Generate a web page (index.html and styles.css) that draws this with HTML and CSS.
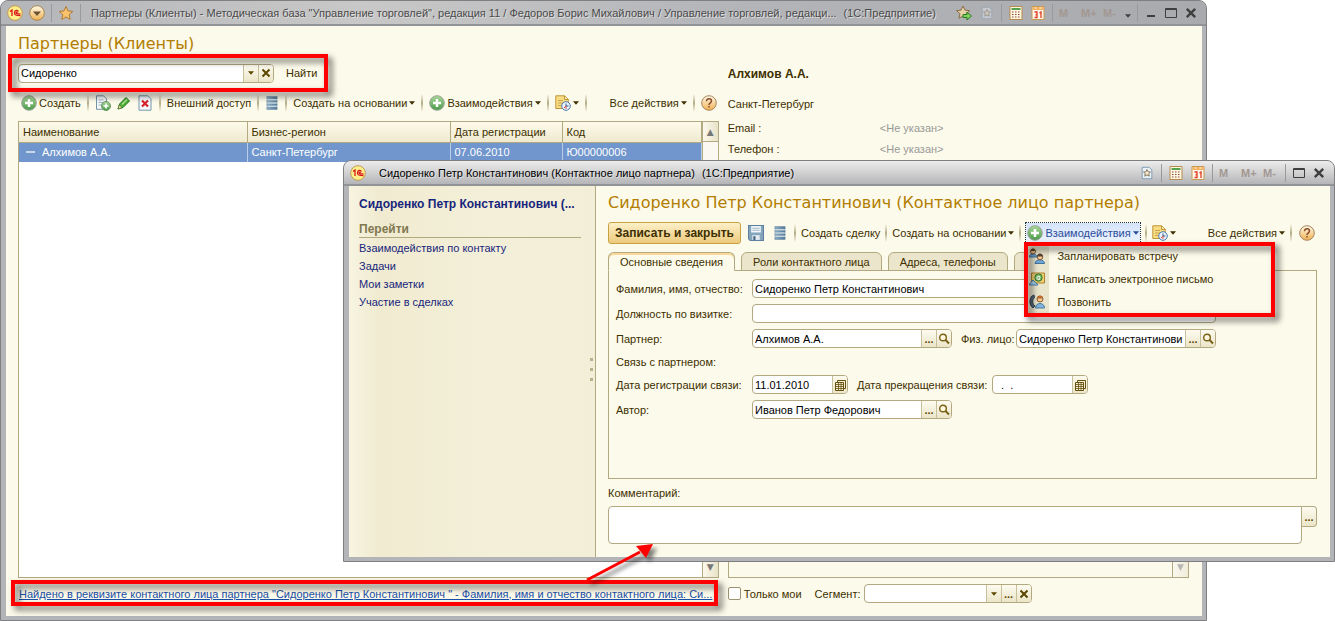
FILE: index.html
```html
<!DOCTYPE html>
<html lang="ru">
<head>
<meta charset="utf-8">
<title>Партнеры (Клиенты)</title>
<link rel="stylesheet" href="styles.css">
</head>
<body>
<svg class="defs" aria-hidden="true">
  <defs>
    <linearGradient id="gold" x1="0" y1="0" x2="0" y2="1"><stop offset="0" stop-color="#fffbe8"/><stop offset="1" stop-color="#f0b050"/></linearGradient>
    <linearGradient id="green" x1="0" y1="0" x2="0" y2="1"><stop offset="0" stop-color="#a9d79a"/><stop offset="1" stop-color="#4b9a48"/></linearGradient>
    <linearGradient id="steel" x1="0" y1="0" x2="1" y2="0"><stop offset="0" stop-color="#8fb0c8"/><stop offset="1" stop-color="#507898"/></linearGradient>
    <symbol id="logo" viewBox="0 0 16 16"><circle cx="8" cy="8" r="7.3" fill="#fdf08a" stroke="#c49a50"/><path d="M3 6.5 5 5v6M11.5 6.5C10.600 4.600 7.500 5 7.500 8c0 2.200 1.500 2.600 6 2.600M10.800 7.500c-1-.9-1.700-.2-1.600.6.1.8 1 .8 4.300.8" fill="none" stroke="#d8151c" stroke-width="1.300"/></symbol>
    <symbol id="down" viewBox="0 0 16 16"><circle cx="8" cy="8" r="7.300" fill="url(#gold)" stroke="#a98750"/><path d="M4 6.500h8L8 11z" fill="#6b5130"/></symbol>
    <symbol id="star" viewBox="0 0 16 16"><path d="M8 1.500l2 4.400 4.800.5-3.600 3.200 1 4.800L8 12l-4.200 2.400 1-4.800L1.200 6.400 6 5.900z" fill="#f8c36c" stroke="#b07a35"/></symbol>
    <symbol id="starGo" viewBox="0 0 16 16"><path d="M7 1l2 4.200 4.500.5-3.400 3 1 4.500L7 11l-4 2.200 1-4.500-3.400-3L5 5.200z" fill="#e8d3a8" stroke="#8a6c45"/><path d="M7 9.500h4V7l4.500 4-4.500 4v-2.500H7z" fill="#7fd05a" stroke="#2b7b25"/></symbol>
    <symbol id="pageStar" viewBox="0 0 14 16"><path d="M1.500 1.500h8l3 3v10h-11z" fill="#eaf2f7" stroke="#7595ae"/><path d="M7 4l1.300 2.600 2.700.3-2 1.900.6 2.800L7 10.200l-2.600 1.400.6-2.800-2-1.900 2.700-.3z" fill="#f5e6c8" stroke="#776b58"/></symbol>
    <symbol id="calc" viewBox="0 0 13 14"><path d="M.5.5h12v13H.5z" fill="#fff6e2" stroke="#b98a4e"/><path d="M2 2h9v2H2z" fill="#55a34c"/><path d="M2.500 6h8M2.500 8.500h8M2.500 11h8" stroke="#8c4935" stroke-width="1.200" stroke-dasharray="1.500 1.500"/></symbol>
    <symbol id="cal" viewBox="0 0 13 14"><path d="M.5.500h12v13H.5z" fill="#fff8ea" stroke="#c79955"/><path d="M1 1h11v3H1z" fill="#f2b15c"/><path d="M3 2h2M8 2h2" stroke="#fff"/><path d="M3 6h2.500v2.800H4h1.500v2.700H3M8 7l1.500-1v6" fill="none" stroke="#e03a22" stroke-width="1.300"/></symbol>
    <symbol id="plus" viewBox="0 0 16 16"><circle cx="8" cy="8" r="7.300" fill="url(#green)" stroke="#9aa398"/><path d="M8 4v8M4 8h8" stroke="#fff" stroke-width="2.500"/></symbol>
    <symbol id="copy" viewBox="0 0 16 16"><path d="M1.500.8h7l3 3v10.500h-10z" fill="#f4f8fa" stroke="#7693a8"/><path d="M3.500 5h5M3.500 7.500h5M3.500 10h3" stroke="#9cb0be"/><circle cx="11" cy="11" r="4.500" fill="url(#green)" stroke="#6b9865"/><path d="M11 8.500v5M8.500 11h5" stroke="#fff" stroke-width="1.600"/></symbol>
    <symbol id="pencil" viewBox="0 0 14 14"><path d="M1 13l1.500-5L9 1.500 12.500 5 6 11.500z" fill="#4dad35" stroke="#23761c"/><path d="M1 13l1.300-4L5 11.600z" fill="#f7dda0" stroke="#47692b" stroke-width=".6"/><path d="M5 8.500L10 3.500" stroke="#b4e69b" stroke-width="1.200"/></symbol>
    <symbol id="delete" viewBox="0 0 14 16"><path d="M1 .8h9l3 3v11.400H1z" fill="#f3f9fc" stroke="#7795ab"/><path d="M4 5.500l6 6M10 5.500l-6 6" stroke="#d7222c" stroke-width="2.200"/></symbol>
    <symbol id="list" viewBox="0 0 12 15"><path d="M.5.500h11v3H.5zM.5 4.500h11v2.500H.5zM.5 8h11v2.500H.5zM.5 11.500h11v3H.5z" fill="url(#steel)" stroke="#6888a2" stroke-width=".6"/><path d="M1 4h10M1 7.500h10M1 11h10" stroke="#dce8ef"/></symbol>
    <symbol id="report" viewBox="0 0 16 16"><path d="M.8.800h9l3.500 3.500v9.200H.8z" fill="#f9dd82" stroke="#bf953d"/><path d="M9.500 1v3.500H13" fill="#fff1b5" stroke="#bf953d"/><path d="M3 5.500h5M3 8h5M3 10.500h3" stroke="#c9a451"/><circle cx="11" cy="11" r="4.300" fill="#edf6ff" stroke="#4779ac"/><path d="M11 8.500V11h2.500" fill="none" stroke="#2b5687"/><path d="M11 14v-3l-2 2" fill="none" stroke="#d35046"/></symbol>
    <symbol id="help" viewBox="0 0 16 16"><circle cx="8" cy="8" r="7.300" fill="url(#gold)" stroke="#a98462"/><path d="M5.500 6.200c0-3.300 5-3 5-.2 0 2-2.500 1.800-2.500 4M8 11v1.500" fill="none" stroke="#8b4a2a" stroke-width="1.500"/></symbol>
    <symbol id="save" viewBox="0 0 15 15"><path d="M.5.500h14v14H2l-1.500-1.500z" fill="#85a5bd" stroke="#5d819d"/><path d="M3 1h9v6H3z" fill="#f3f8fb"/><path d="M4 3h7M4 5h7" stroke="#a4b7c3"/><path d="M4 9.500h7V14H4z" fill="#e1eaf0"/><path d="M5 10.500h2V14H5z" fill="#3f617c"/></symbol>
    <symbol id="lens" viewBox="0 0 12 12"><circle cx="5" cy="4.500" r="3.300" fill="#fff9df" stroke="#786016" stroke-width="1.400"/><path d="M7.500 7l3.500 3.500" stroke="#786016" stroke-width="2"/></symbol>
    <symbol id="grid" viewBox="0 0 12 12"><path d="M3.500 1.500h8v8h-8z" fill="#f5eed2" stroke="#665010"/><path d="M1.500 3.500h8v8h-8z" fill="#f5eed2" stroke="#665010"/><path d="M1.500 5.500h8M1.500 7.500h8M1.500 9.500h8M4.500 3.500v8M7 3.500v8" stroke="#665010" stroke-width=".8"/></symbol>
    <symbol id="caret" viewBox="0 0 7 4"><path d="M0 0h7L3.500 4z" fill="currentColor"/></symbol>
    <symbol id="cross" viewBox="0 0 10 10"><path d="M1.500 1.500l7 7M8.500 1.500l-7 7" stroke="currentColor" stroke-width="2"/></symbol>
    <symbol id="max" viewBox="0 0 12 12"><path d="M.5 1.500h11v9H.5zM.5 2.500h11" fill="none" stroke="#3f3f3f"/></symbol>
    <symbol id="min" viewBox="0 0 12 12"><path d="M2 9h8" stroke="#3f3f3f" stroke-width="2"/></symbol>
    <symbol id="people" viewBox="0 0 16 16"><path d="M0 9c0-4 8-4 8 0z" fill="#6fa7d6" stroke="#44749f"/><circle cx="4" cy="3.500" r="2.500" fill="#f4c996" stroke="#7d5737"/><path d="M1.500 3C2-.5 6-.5 6.500 3z" fill="#6d4928"/><path d="M6 15.500c0-5 9.500-5 9.500 0z" fill="#6fa7d6" stroke="#44749f"/><circle cx="11" cy="9" r="2.800" fill="#f4c996" stroke="#7d5737"/><path d="M8 8.500c.5-4 5.500-4 6 0z" fill="#594234"/></symbol>
    <symbol id="mail" viewBox="0 0 16 14"><path d="M2.500 1h13v10h-13z" fill="#f1d070" stroke="#ad812f"/><circle cx="9.500" cy="5.500" r="3.700" fill="#74b660" stroke="#30762f"/><path d="M11 7c-4 2-4-3-1-2.800 1.500.2.800 2.300 0 2.800" fill="none" stroke="#fff"/><path d="M.5 12L4 8l5 5H.5z" fill="#a8d1ef" stroke="#4a7fa8"/></symbol>
    <symbol id="call" viewBox="0 0 16 16"><path d="M5 1C0 2-.5 11 4 14l2-2c-3-2-3-6-.5-8.500z" fill="#52687a" stroke="#354754"/><circle cx="11" cy="5" r="3" fill="#f6c892" stroke="#8b5b2f"/><path d="M8 4.500c.5-4 5.500-4 6 0z" fill="#b86b2c"/><path d="M6.500 14c0-6 9-6 9 0z" fill="#85b5dc" stroke="#4479a3"/></symbol>
  </defs>
</svg>

<div class="desktop">
  <section class="window window-main" aria-label="Партнеры (Клиенты)">
    <header class="titlebar">
      <svg class="i16"><use href="#logo"/></svg>
      <button class="icon" aria-label="Главное меню"><svg class="i16"><use href="#down"/></svg></button>
      <span class="sep"></span>
      <button class="icon" aria-label="Избранное"><svg class="i16"><use href="#star"/></svg></button>
      <span class="sep"></span>
      <div class="caption"><span class="clip">Партнеры (Клиенты) - Методическая база "Управление торговлей", редакция 11 / Федоров Борис Михайлович / Управление торговлей, редакци...</span><span>(1С:Предприятие)</span></div>
      <div class="tools">
        <button class="icon" aria-label="Добавить в избранное"><svg class="i16"><use href="#starGo"/></svg></button>
        <button class="icon faded" aria-label="Ссылка"><svg class="i14"><use href="#pageStar"/></svg></button>
        <span class="sep"></span>
        <button class="icon" aria-label="Калькулятор"><svg class="i14"><use href="#calc"/></svg></button>
        <button class="icon" aria-label="Календарь"><svg class="i14"><use href="#cal"/></svg></button>
        <span class="sep"></span>
        <button class="mem">M</button><button class="mem">M+</button><button class="mem">M-</button>
        <button class="low" aria-label="Еще"><svg class="caret"><use href="#caret"/></svg></button>
        <span class="sep"></span>
        <button class="icon" aria-label="Свернуть"><svg class="i12"><use href="#min"/></svg></button>
        <button class="icon" aria-label="Развернуть"><svg class="i12"><use href="#max"/></svg></button>
        <button class="icon" aria-label="Закрыть"><svg class="i12"><use href="#cross"/></svg></button>
      </div>
    </header>
    <div class="main-body">
      <h1 class="heading">Партнеры (Клиенты)</h1>
      <div class="columns">
        <div class="list-side">
          <form class="search">
            <div class="field combo"><input aria-label="Строка поиска" value="Сидоренко"><button type="button" aria-label="История"><svg class="caret"><use href="#caret"/></svg></button><button type="button" aria-label="Очистить"><svg class="i10"><use href="#cross"/></svg></button></div>
            <button type="button" class="flat">Найти</button>
          </form>
          <div class="toolbar">
            <button class="flat"><svg class="i16"><use href="#plus"/></svg>Создать</button>
            <span class="sep"></span>
            <button class="icon" aria-label="Скопировать"><svg class="i16"><use href="#copy"/></svg></button>
            <button class="icon" aria-label="Изменить"><svg class="i14"><use href="#pencil"/></svg></button>
            <button class="icon" aria-label="Удалить"><svg class="i16"><use href="#delete"/></svg></button>
            <span class="sep"></span>
            <button class="flat">Внешний доступ</button>
            <span class="sep"></span>
            <button class="icon" aria-label="Список"><svg class="i14"><use href="#list"/></svg></button>
            <span class="sep"></span>
            <button class="flat">Создать на основании<svg class="caret"><use href="#caret"/></svg></button>
            <span class="sep"></span>
            <button class="flat"><svg class="i16"><use href="#plus"/></svg>Взаимодействия<svg class="caret"><use href="#caret"/></svg></button>
            <span class="sep"></span>
            <button class="flat" aria-label="Отчеты"><svg class="i16"><use href="#report"/></svg><svg class="caret"><use href="#caret"/></svg></button>
            <span class="sep"></span>
            <button class="flat push">Все действия<svg class="caret"><use href="#caret"/></svg></button>
            <span class="sep"></span>
            <button class="icon" aria-label="Справка"><svg class="i16"><use href="#help"/></svg></button>
          </div>
          <div class="table-box">
            <div class="table-area">
              <table>
                <colgroup><col class="c-name"><col class="c-region"><col class="c-date"><col class="c-code"></colgroup>
                <thead><tr><th>Наименование</th><th>Бизнес-регион</th><th>Дата регистрации</th><th>Код</th></tr></thead>
                <tbody><tr><td><span class="dash"></span>Алхимов А.А.</td><td>Санкт-Петербург</td><td>07.06.2010</td><td>Ю00000006</td></tr></tbody>
              </table>
            </div>
            <div class="scroll"><button aria-label="Вверх">▲</button><button aria-label="Вниз">▼</button></div>
          </div>
        </div>
        <div class="info-side">
          <strong class="info-name">Алхимов А.А.</strong>
          <p class="info-city">Санкт-Петербург</p>
          <dl class="contacts"><dt>Email :</dt><dd>&lt;Не указан&gt;</dd><dt>Телефон :</dt><dd>&lt;Не указан&gt;</dd></dl>
          <div class="info-box"><div class="scroll dim"><button aria-label="Вверх">▲</button><button aria-label="Вниз">▼</button></div></div>
        </div>
      </div>
      <footer class="columns foot">
        <a class="found" href="#">Найдено в реквизите контактного лица партнера "Сидоренко Петр Константинович " - Фамилия, имя и отчество контактного лица: Си...</a>
        <div class="filters">
          <label class="check"><input type="checkbox">Только мои</label>
          <label for="segment">Сегмент:</label>
          <div class="field"><input id="segment"><button aria-label="Список сегментов"><svg class="caret"><use href="#caret"/></svg></button><button aria-label="Выбрать">...</button><button aria-label="Очистить сегмент"><svg class="i10"><use href="#cross"/></svg></button></div>
        </div>
      </footer>
    </div>
    <div class="mark mark-search"></div>
    <div class="mark mark-found"></div>
  </section>

  <section class="window window-card" aria-label="Сидоренко Петр Константинович">
    <header class="titlebar">
      <svg class="i16"><use href="#logo"/></svg>
      <div class="caption"><span class="clip">Сидоренко Петр Константинович (Контактное лицо партнера)</span><span>(1С:Предприятие)</span></div>
      <div class="tools">
        <button class="icon" aria-label="Ссылка"><svg class="i14"><use href="#pageStar"/></svg></button>
        <span class="sep"></span>
        <button class="icon" aria-label="Калькулятор"><svg class="i14"><use href="#calc"/></svg></button>
        <button class="icon" aria-label="Календарь"><svg class="i14"><use href="#cal"/></svg></button>
        <span class="sep"></span>
        <button class="mem">M</button><button class="mem">M+</button><button class="mem">M-</button>
        <span class="sep"></span>
        <button class="icon" aria-label="Развернуть"><svg class="i12"><use href="#max"/></svg></button>
        <button class="icon" aria-label="Закрыть"><svg class="i12"><use href="#cross"/></svg></button>
      </div>
    </header>
    <div class="card-body">
      <nav class="nav">
        <strong class="nav-title">Сидоренко Петр Константинович (...</strong>
        <h2>Перейти</h2>
        <a href="#">Взаимодействия по контакту</a>
        <a href="#">Задачи</a>
        <a href="#">Мои заметки</a>
        <a href="#">Участие в сделках</a>
        <div class="grip"><i></i><i></i><i></i></div>
      </nav>
      <div class="card">
        <h1 class="heading">Сидоренко Петр Константинович (Контактное лицо партнера)</h1>
        <div class="toolbar">
          <button class="primary">Записать и закрыть</button>
          <button class="icon" aria-label="Записать"><svg class="i16"><use href="#save"/></svg></button>
          <button class="icon" aria-label="Список"><svg class="i14"><use href="#list"/></svg></button>
          <span class="sep"></span>
          <button class="flat">Создать сделку</button>
          <span class="sep"></span>
          <button class="flat">Создать на основании<svg class="caret"><use href="#caret"/></svg></button>
          <span class="sep"></span>
          <div class="dropdown">
            <button class="flat pressed"><svg class="i16"><use href="#plus"/></svg>Взаимодействия<svg class="caret"><use href="#caret"/></svg></button>
            <div class="menu">
              <button><svg class="i16"><use href="#people"/></svg>Запланировать встречу</button>
              <button><svg class="i16"><use href="#mail"/></svg>Написать электронное письмо</button>
              <button><svg class="i16"><use href="#call"/></svg>Позвонить</button>
              <div class="mark mark-menu"></div>
            </div>
          </div>
          <span class="sep"></span>
          <button class="flat" aria-label="Отчеты"><svg class="i16"><use href="#report"/></svg><svg class="caret"><use href="#caret"/></svg></button>
          <button class="flat push">Все действия<svg class="caret"><use href="#caret"/></svg></button>
          <span class="sep"></span>
          <button class="icon" aria-label="Справка"><svg class="i16"><use href="#help"/></svg></button>
        </div>
        <div class="tabs"><button class="active">Основные сведения</button><button>Роли контактного лица</button><button>Адреса, телефоны</button><button aria-label="Прочее"></button></div>
        <div class="panel">
          <div class="row"><label for="fio">Фамилия, имя, отчество:</label><div class="field wide"><input id="fio" value="Сидоренко Петр Константинович"></div></div>
          <div class="row"><label for="post">Должность по визитке:</label><div class="field wide"><input id="post"></div></div>
          <div class="row"><label for="partner">Партнер:</label><div class="field"><input id="partner" value="Алхимов А.А."><button aria-label="Выбрать партнера">...</button><button aria-label="Открыть партнера"><svg class="i12"><use href="#lens"/></svg></button></div><label class="second person" for="person">Физ. лицо:</label><div class="field"><input id="person" value="Сидоренко Петр Константинович"><button aria-label="Выбрать лицо">...</button><button aria-label="Открыть лицо"><svg class="i12"><use href="#lens"/></svg></button></div></div>
          <div class="row short"><span>Связь с партнером:</span></div>
          <div class="row"><label for="start">Дата регистрации связи:</label><div class="field date"><input id="start" value="11.01.2010"><button aria-label="Календарь начала"><svg class="i12"><use href="#grid"/></svg></button></div><label class="second until" for="end">Дата прекращения связи:</label><div class="field date"><input id="end" value="  .  ."><button aria-label="Календарь окончания"><svg class="i12"><use href="#grid"/></svg></button></div></div>
          <div class="row"><label for="author">Автор:</label><div class="field"><input id="author" value="Иванов Петр Федорович"><button aria-label="Выбрать автора">...</button><button aria-label="Открыть автора"><svg class="i12"><use href="#lens"/></svg></button></div></div>
        </div>
        <label class="comment-label" for="comment">Комментарий:</label>
        <div class="comment"><textarea id="comment"></textarea><button aria-label="Открыть комментарий">...</button></div>
      </div>
    </div>
  </section>

  <svg class="pointer" viewBox="0 0 80 50" aria-hidden="true"><path d="M7 40L60 12" stroke="#f00" stroke-width="3"/><path d="M73 4L66 18 56 6z" fill="#f00"/></svg>
</div>
</body>
</html>
```
FILE: styles.css
```css
* { box-sizing: border-box; }
body { margin: 0; background: #fff; color: #3d2f00; font: 11px/16px "Liberation Sans", Arial, sans-serif; }
button, input, textarea { font: inherit; color: inherit; margin: 0; }
button { padding: 0; border: 0; background: none; white-space: nowrap; }
svg { display: block; flex: none; }
label { white-space: nowrap; }
.defs { position: absolute; width: 0; height: 0; }
.i16 { width: 16px; height: 16px; }
.i14 { width: 14px; height: 14px; }
.i12 { width: 12px; height: 12px; }
.i10 { width: 10px; height: 10px; }
.caret { width: 6px; height: 4px; }

.desktop { position: relative; height: 100vh; min-height: 600px; overflow: hidden; }
.window { position: absolute; display: flex; flex-direction: column; background: #b3b4b8; border: 1px solid #7f7f82; border-radius: 8px 8px 0 0; padding: 0 4px 4px 5px; }
.window-main { inset: 0 128px 0 0; }
.window-card { inset: 160px 0 59px 343px; }

.titlebar { display: flex; align-items: center; gap: 6px; height: 25px; flex: none; margin: 0 -4px 0 -5px; padding: 0 8px 0 6px; border-radius: 7px 7px 0 0; border-bottom: 2px solid #929397; background: linear-gradient(90deg, #b4b5b8, #c8c8c8 30%, #b4b5b9 60%, #a9aaae); color: #4a4a4a; }
.window-card .titlebar { background: linear-gradient(#ececec, #cfcfd0 55%, #b4b5b8); color: #000; }
.window-card .caption { padding-left: 7px; }
.caption { display: flex; flex: 1; min-width: 0; gap: 7px; padding-left: 4px; white-space: nowrap; text-shadow: 1px 1px 0 #dedede; }
.clip { overflow: hidden; }
.tools { display: flex; align-items: center; gap: 6px; color: #3f3f3f; }
.tools .icon { padding: 0 1px; }
.sep { width: 2px; height: 18px; flex: none; background: linear-gradient(transparent, #b5ac88, transparent); }
.titlebar .sep { width: 1px; background: #9a9a9d; }
.icon { display: flex; align-items: center; }
.faded { opacity: .4; }
.low { padding-top: 6px; }
.mem { min-width: 16px; color: #a39792; font-weight: bold; text-align: left; }

.main-body { flex: 1; min-height: 0; display: flex; flex-direction: column; padding: 8px 13px 13px 12px; background: #fcfaea; }
.heading { margin: 0; font: 16px/20px "DejaVu Sans", Verdana, sans-serif; color: #b27d00; white-space: nowrap; overflow: hidden; }
.columns { display: grid; grid-template-columns: 702fr 462fr; gap: 9px; flex: 1; min-height: 0; }
.list-side, .info-side { display: flex; flex-direction: column; min-width: 0; }
.search { display: flex; align-items: center; gap: 12px; margin-top: 9px; }
.field { display: flex; width: 200px; height: 19px; border: 1px solid #b2a980; border-radius: 4px; background: #fff; overflow: hidden; flex: none; color: #000; }
.field input { flex: 1; min-width: 0; width: 0; border: 0; background: none; padding: 0 2px; outline: 0; }
.field button, .comment button { width: 15px; display: flex; align-items: center; justify-content: center; border-left: 1px solid #c8bf9b; background: linear-gradient(#fdfbf0, #ebe5c8); color: #5c4700; font-weight: bold; }
.combo { width: 256px; }
.toolbar { display: flex; align-items: center; gap: 6px; height: 24px; flex: none; }
.list-side .toolbar { margin: 8px 0 6px; padding: 0 2px 0 3px; }
.flat { display: flex; align-items: center; gap: 2px; height: 20px; }
.push { margin-left: auto; }

.table-box { display: flex; flex: 1; min-height: 0; border: 1px solid #b2a980; background: #fff; }
.table-area { flex: 1; }
table { width: 100%; table-layout: fixed; border-collapse: collapse; }
.c-name { width: 228px; }
.c-region { width: 203px; }
.c-date { width: 112px; }
th { height: 20px; padding: 0 4px; border-right: 1px solid #b2a980; border-bottom: 1px solid #b2a980; background: linear-gradient(#fcfaea, #efe9cf); font-weight: normal; text-align: left; }
td { height: 20px; padding: 0 4px; border-right: 1px solid #b9cde8; background: #7096cd; color: #fff; }
.dash { display: inline-block; width: 9px; height: 2px; margin: 0 7px 3px 3px; background: #c8d8e6; }
.scroll { display: flex; flex-direction: column; justify-content: space-between; width: 16px; border-left: 1px solid #b2a980; background: #faf8f0; }
.scroll button { height: 20px; background: linear-gradient(90deg, #fbf9ec, #e8e2c8); border-bottom: 1px solid #b2a980; color: #777; font: 9px/18px "DejaVu Sans", sans-serif; }
.scroll button:last-child { border: 0; }
.dim button { opacity: .5; }

.info-name { margin-top: 12px; font-size: 12px; }
.info-city { margin: 14px 0 8px; }
.contacts { display: grid; grid-template-columns: 152px 1fr; gap: 5px 0; margin: 0; }
.contacts dd { margin: 0; color: #999; }
.info-box { display: flex; justify-content: flex-end; flex: 1; margin-top: 8px; border: 1px solid #b2a980; }
.foot { flex: none; align-items: center; padding-top: 6px; }
.found { overflow: hidden; white-space: nowrap; color: #1a4fa8; margin: 0 4px 0 1px; }
.filters { display: flex; align-items: center; gap: 3px; }
.filters .field { width: 168px; }
.check { display: flex; align-items: center; gap: 3px; margin-right: 10px; }
.check input { appearance: none; width: 13px; height: 13px; border: 1px solid #9c9370; border-radius: 2px; background: #fff; }

.mark { position: absolute; border: 4px solid #f00; filter: drop-shadow(4px 4px 3px rgba(0, 0, 0, .6)); pointer-events: none; }
.mark-search { left: 7px; top: 53px; width: 320px; height: 38px; }
.mark-found { left: 10px; bottom: 14px; width: calc(60% - 16px); height: 26px; }
.mark-menu { inset: -1px 0 -4px -1px; }

.card-body { display: flex; flex: 1; min-height: 0; background: #fcfaea; }
.nav { position: relative; width: 247px; flex: none; display: flex; flex-direction: column; gap: 2px; padding: 10px 14px 0 10px; border-right: 1px solid #b2a980; background: linear-gradient(90deg, #f7f4e1, #f0ebd0 12%, #f4efd9 60%, #f3eed8); }
.nav-title { font-size: 12px; color: #17267c; white-space: nowrap; overflow: hidden; }
.nav h2 { margin: 8px 0 0; font-size: 12px; line-height: 15px; color: #807850; border-bottom: 1px solid #b2a980; }
.nav a { color: #17267c; text-decoration: none; }
.grip { position: absolute; right: 2px; top: 172px; display: grid; gap: 7px; }
.grip i { width: 3px; height: 3px; background: #b9b08c; }

.card { flex: 1; min-width: 0; display: flex; flex-direction: column; padding: 7px 13px 13px 12px; }
.card .toolbar { gap: 5px; margin-top: 8px; }
.card .toolbar .icon { padding: 0 2px; }
.primary { height: 22px; padding: 0 6px; border: 1px solid #c9a23f; border-radius: 3px; background: linear-gradient(#fdf0c8, #ecca7d); font-size: 12px; font-weight: bold; }
.dropdown { position: relative; }
.pressed { padding: 0 1px; background: linear-gradient(#d5e3fa, #eef4ff); outline: 1px dotted #234; color: #2a4c9a; }
.menu { position: absolute; z-index: 2; left: -1px; top: 20px; width: 250px; padding: 1px 0 0 4px; background: linear-gradient(90deg, #e9e4cc 24px, #fcfaea 24px); }
.menu button { display: flex; align-items: center; gap: 12px; width: 100%; height: 23px; }
.tabs { display: flex; gap: 6px; margin: 7px 0 -1px; }
.tabs button { height: 19px; padding: 0 11px; border: 1px solid #b2a980; border-radius: 6px 6px 0 0; background: #ebe5cb; }
.tabs button:last-child { width: 120px; }
.tabs .active { position: relative; background: #fcfaea; border-bottom-color: #fcfaea; box-shadow: inset 0 2px #f8d99a; }
.panel { flex: 1; min-height: 0; display: flex; flex-direction: column; gap: 6px; padding: 8px 7px; border: 1px solid #b2a980; }
.row { display: flex; align-items: center; height: 19px; flex: none; }
.row > :first-child { width: 136px; flex: none; }
.short { height: 15px; }
.wide { width: 464px; }
.date { width: 96px; }
.date input { white-space: pre; }
.second { padding-left: 9px; }
.person { width: 64px; }
.until { width: 144px; }
.comment-label { margin: 6px 0 5px; }
.comment { display: flex; align-items: flex-start; }
textarea { flex: 1; height: 38px; resize: none; border: 1px solid #b2a980; border-radius: 4px 0 4px 4px; background: #fff; }
.comment button { height: 21px; border: 1px solid #b2a980; border-left: 0; border-radius: 0 4px 4px 0; }

.pointer { position: absolute; left: 580px; bottom: 31px; width: 80px; height: 50px; filter: drop-shadow(4px 4px 2px rgba(0, 0, 0, .5)); }
```
